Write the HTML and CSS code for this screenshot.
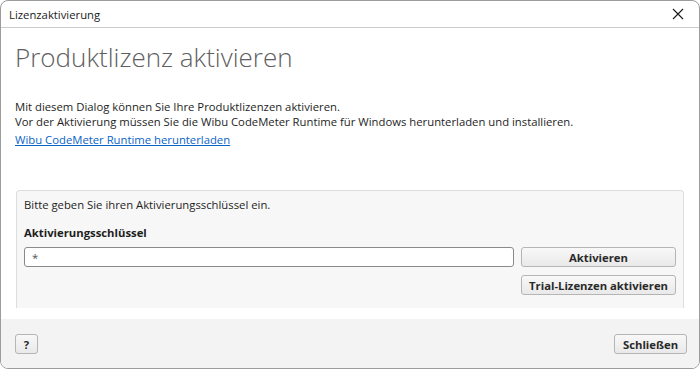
FILE: index.html
```html
<!DOCTYPE html>
<html>
<head>
    <title>Lizenzaktivierung</title>
    <link rel="stylesheet" href="styles.css">
</head>
<body>
    <div class="window">
        <div class="titlebar">
            <span class="title">Lizenzaktivierung</span>
            <svg class="close" width="12" height="12" viewBox="0 0 12 12">
                <path d="M1 1 L11 11 M11 1 L1 11" stroke="#1a1a1a" stroke-width="1.1" fill="none"/>
            </svg>
        </div>

        <div class="content">
            <h1>Produktlizenz aktivieren</h1>
            <p class="intro">
                Mit diesem Dialog können Sie Ihre Produktlizenzen aktivieren.<br>
                Vor der Aktivierung müssen Sie die Wibu CodeMeter Runtime für Windows herunterladen und installieren.
            </p>
            <a class="link" href="#">Wibu CodeMeter Runtime herunterladen</a>

            <div class="panel">
                <div class="hint">Bitte geben Sie ihren Aktivierungsschlüssel ein.</div>
                <div class="label">Aktivierungsschlüssel</div>
                <div class="key-row">
                    <div class="input">*</div>
                    <div class="actions">
                        <button class="btn">Aktivieren</button>
                        <button class="btn">Trial-Lizenzen aktivieren</button>
                    </div>
                </div>
            </div>
        </div>

        <div class="footer">
            <button class="btn btn-help">?</button>
            <button class="btn btn-close">Schließen</button>
        </div>
    </div>
</body>
</html>
```

FILE: styles.css
```css
html, body {
    margin: 0;
    padding: 0;
    background: #ffffff;
}
body {
    font-family: "Segoe UI", "Open Sans", "Noto Sans", sans-serif;
    font-size: 11.3px;
    color: #1e1e1e;
}
.window {
    box-sizing: border-box;
    width: 700px;
    height: 369px;
    border: 1px solid #9c9c9c;
    border-radius: 8px;
    overflow: hidden;
    display: flex;
    flex-direction: column;
    background: #fff;
}
.titlebar {
    height: 26px;
    border-bottom: 1px solid #cccccc;
    display: flex;
    align-items: center;
    justify-content: space-between;
    padding: 0 15px 0 8px;
}
.title {
    font-size: 11.3px;
    color: #1a1a1a;
}
.close {
    display: block;
}
.content {
    flex: 1;
    padding: 10px 15px 11px 14px;
    display: flex;
    flex-direction: column;
}
h1 {
    margin: 0;
    font-size: 26px;
    font-weight: 300;
    color: #606060;
    line-height: 38px;
}
.intro {
    margin: 23px 0 0 0;
    line-height: 15px;
    color: #1e1e1e;
}
.link {
    margin-top: 3px;
    color: #0a64c8;
    text-decoration: underline;
    line-height: 15px;
    align-self: flex-start;
}
.panel {
    margin-top: 43px;
    margin-left: 1px;
    flex: 1;
    background: #f7f7f7;
    border: 1px solid #dddddd;
    border-bottom: none;
    border-radius: 4px 4px 0 0;
    padding: 6px 7px 0 7px;
}
.hint {
    line-height: 15px;
}
.label {
    margin-top: 13px;
    font-weight: bold;
    line-height: 15px;
}
.key-row {
    display: flex;
    gap: 7px;
    margin-top: 7px;
}
.input {
    flex: 1;
    box-sizing: border-box;
    height: 20px;
    background: #fff;
    border: 1px solid #8a8a8a;
    border-radius: 3px;
    padding: 0 0 0 7px;
    line-height: 20px;
    color: #555;
}
.actions {
    width: 155px;
    display: flex;
    flex-direction: column;
    gap: 8px;
}
.btn {
    box-sizing: border-box;
    height: 20px;
    padding: 0 4px;
    font-family: inherit;
    font-size: 11.3px;
    font-weight: bold;
    color: #2a2a2a;
    background: linear-gradient(#f8f8f8, #e9e9e9);
    border: 1px solid #b5b5b5;
    border-radius: 3px;
    line-height: 17px;
    white-space: nowrap;
}
.footer {
    height: 49px;
    background: #f3f3f3;
    display: flex;
    justify-content: space-between;
    align-items: flex-start;
    padding: 15px 12px 0 14px;
    box-sizing: border-box;
}
.btn-help {
    width: 23px;
    padding: 0;
}
.btn-close {
    width: 73px;
    padding: 0;
}
```
